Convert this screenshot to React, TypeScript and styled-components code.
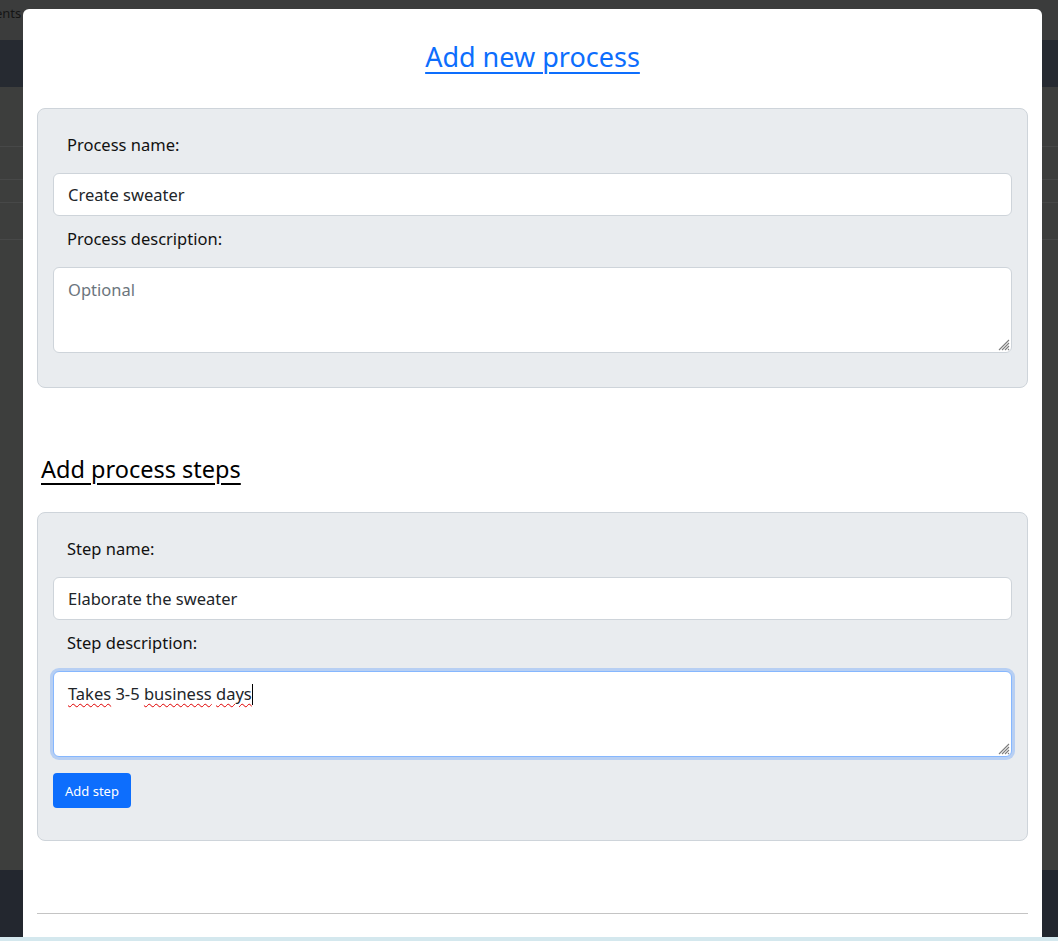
import React from "react";
import styled, { createGlobalStyle } from "styled-components";

const GlobalStyle = createGlobalStyle`
  html, body { margin: 0; padding: 0; }
  body {
    background: #3d3e3d;
    font-family: "Noto Sans", "Open Sans", sans-serif;
    overflow: hidden;
  }
  * { box-sizing: border-box; }
`;

const Page = styled.div`
  position: relative;
  width: 1058px;
  height: 941px;
  overflow: hidden;
`;

const Backdrop = styled.div`
  display: flex;
  flex-direction: column;
  height: 941px;
`;

const TopStrip = styled.div`
  height: 40px;
  background: #3b3c3c;
  color: #151515;
  font-size: 13px;
  line-height: 26px;
  text-indent: -5px;
`;

const NavBand = styled.div`
  height: 47px;
  background: #262a31;
`;

const BgRow = styled.div<{ $h: number }>`
  height: ${(p) => p.$h}px;
  border-bottom: 1px solid #474848;
  background: #3d3e3d;
`;

const BgFill = styled.div`
  flex: 1;
  background: #3d3e3d;
`;

const FooterBand = styled.div`
  height: 67px;
  background: #23272f;
`;

const BottomStrip = styled.div`
  height: 4px;
  background: #d4e8ee;
`;

const Modal = styled.div`
  position: absolute;
  top: 9px;
  left: 23px;
  width: 1019px;
  height: 928px;
  background: #fff;
  border-radius: 6px 6px 0 0;
  padding: 0 14px;
  display: flex;
  flex-direction: column;
`;

const Title = styled.h3`
  margin: 28px 0 31px;
  text-align: center;
  font-size: 27px;
  font-weight: 400;
  line-height: 40px;
  a {
    color: #0d6efd;
    text-decoration: underline;
    text-underline-offset: 5px;
    text-decoration-thickness: 2px;
  }
`;

const Card = styled.div`
  background: #e9ecef;
  border: 1px solid #ced4da;
  border-radius: 8px;
  padding: 24px 15px 16px;
`;

const Label = styled.label`
  display: block;
  padding: 0 14px;
  font-size: 16.5px;
  line-height: 24px;
  color: #111;
  margin-bottom: 16px;
`;

const Input = styled.input`
  display: block;
  width: 100%;
  height: 43px;
  border: 1px solid #ced4da;
  border-radius: 6px;
  background: #fff;
  padding: 0 14px;
  font-family: inherit;
  font-size: 16.5px;
  color: #212529;
  margin-bottom: 11px;
  outline: none;
`;

const AreaWrap = styled.div<{ $gap: number }>`
  position: relative;
  margin-bottom: ${(p) => p.$gap}px;
`;

const TextArea = styled.textarea`
  display: block;
  width: 100%;
  height: 86px;
  border: 1px solid #ced4da;
  border-radius: 6px;
  background: #fff;
  padding: 10px 14px;
  font-family: inherit;
  font-size: 16.5px;
  line-height: 24px;
  color: #212529;
  margin: 0;
  resize: none;
  outline: none;
  &::placeholder { color: #6c757d; }
`;

const FocusedArea = styled.div`
  width: 100%;
  height: 86px;
  border: 1px solid #86b7fe;
  border-radius: 6px;
  background: #fff;
  box-shadow: 0 0 0 3px #b7cff3;
  padding: 10px 14px;
  font-size: 16.5px;
  line-height: 24px;
  color: #212529;
`;

const Misspelled = styled.span`
  text-decoration: underline wavy #e00000;
  text-decoration-thickness: 1.3px;
  text-underline-offset: 3px;
`;

const Caret = styled.span`
  display: inline-block;
  width: 1px;
  height: 21px;
  background: #000;
  vertical-align: -5px;
`;

const Grip = styled.svg`
  position: absolute;
  right: 2px;
  bottom: 2px;
  pointer-events: none;
`;

const SubHeading = styled.h4`
  margin: 64px 0 26px 4px;
  font-size: 23.5px;
  font-weight: 400;
  line-height: 34px;
  color: #000;
  text-decoration: underline;
  text-underline-offset: 5px;
  text-decoration-thickness: 2px;
`;

const Button = styled.button`
  display: block;
  height: 35px;
  padding: 0 12px;
  margin-bottom: 16px;
  border: none;
  border-radius: 4px;
  background: #0d6efd;
  color: #fff;
  font-family: inherit;
  font-size: 13px;
`;

const Divider = styled.hr`
  margin: 72px 0 0;
  border: none;
  border-top: 1px solid #c4c4c4;
`;

const ResizeGrip = () => (
  <Grip width="14" height="14" viewBox="0 0 14 14">
    <path
      d="M13 3 L3 13 M13 6 L6 13 M13 9 L9 13 M13 12 L12 13"
      stroke="#7d7d7d"
      strokeWidth="1.1"
    />
  </Grip>
);

export default function App() {
  return (
    <>
      <GlobalStyle />
      <Page>
        <Backdrop>
          <TopStrip>ents</TopStrip>
          <NavBand />
          <BgRow $h={60} />
          <BgRow $h={33} />
          <BgRow $h={23} />
          <BgRow $h={37} />
          <BgFill />
          <FooterBand />
          <BottomStrip />
        </Backdrop>
        <Modal>
          <Title>
            <a href="#">Add new process</a>
          </Title>
          <Card>
            <Label>Process name:</Label>
            <Input defaultValue="Create sweater" />
            <Label>Process description:</Label>
            <AreaWrap $gap={18}>
              <TextArea placeholder="Optional" />
              <ResizeGrip />
            </AreaWrap>
          </Card>
          <SubHeading>Add process steps</SubHeading>
          <Card>
            <Label>Step name:</Label>
            <Input defaultValue="Elaborate the sweater" />
            <Label>Step description:</Label>
            <AreaWrap $gap={16}>
              <FocusedArea>
                <Misspelled>Takes</Misspelled> 3-5 <Misspelled>business</Misspelled>{" "}
                <Misspelled>days</Misspelled>
                <Caret />
              </FocusedArea>
              <ResizeGrip />
            </AreaWrap>
            <Button>Add step</Button>
          </Card>
          <Divider />
        </Modal>
      </Page>
    </>
  );
}
